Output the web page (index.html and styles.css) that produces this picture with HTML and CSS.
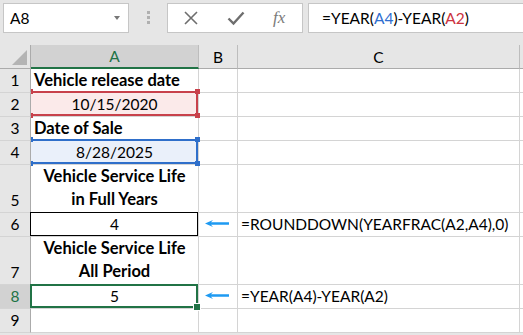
FILE: index.html
```html
<!DOCTYPE html>
<html>
<head>
<meta charset="utf-8">
<link rel="stylesheet" href="styles.css">
</head>
<body>
<div class="app">
  <div class="fbar">
    <div class="namebox"><span class="nb-text">A8</span><span class="nb-caret"></span></div>
    <div class="grip"><i></i><i></i><i></i></div>
    <div class="fbtns">
      <svg class="ico-x" width="16" height="16" viewBox="0 0 16 16"><path d="M2 2 L14 14 M14 2 L2 14" stroke="#6e6e6e" stroke-width="1.6" fill="none"/></svg>
      <svg class="ico-ok" width="18" height="16" viewBox="0 0 18 16"><path d="M1.5 8.5 L6.5 13.5 L16.5 2.5" stroke="#6e6e6e" stroke-width="2.4" fill="none"/></svg>
      <span class="fx">fx</span>
    </div>
    <div class="finput">=YEAR(<span class="ref-b">A4</span>)-YEAR(<span class="ref-r">A2</span>)</div>
  </div>
  <div class="grid">
    <div class="corner"><span class="tri"></span></div>
    <div class="ch ch-sel">A</div>
    <div class="ch">B</div>
    <div class="ch">C</div>
    <div class="ch ch-end"></div>

    <div class="rh">1</div>
    <div class="c bold left">Vehicle release date</div>
    <div class="c"></div><div class="c"></div><div class="c end"></div>

    <div class="rh">2</div>
    <div class="c center hl-r">10/15/2020<div class="sel sel-r"><i class="h tr"></i><i class="h br"></i><i class="h tl"></i><i class="h bl"></i></div></div>
    <div class="c"></div><div class="c"></div><div class="c end"></div>

    <div class="rh">3</div>
    <div class="c bold left">Date of Sale</div>
    <div class="c"></div><div class="c"></div><div class="c end"></div>

    <div class="rh">4</div>
    <div class="c center hl-b">8/28/2025<div class="sel sel-b"><i class="h tr"></i><i class="h br"></i><i class="h tl"></i><i class="h bl"></i></div></div>
    <div class="c"></div><div class="c"></div><div class="c end"></div>

    <div class="rh">5</div>
    <div class="c bold center wrap">Vehicle Service Life<br>in Full Years</div>
    <div class="c"></div><div class="c"></div><div class="c end"></div>

    <div class="rh">6</div>
    <div class="c center">4<div class="box-k"></div></div>
    <div class="c center"><svg class="arrow" width="24" height="7" viewBox="0 0 24 7"><path d="M0 3.5 L8 0 L6 2.3 L24 2.3 L24 4.7 L6 4.7 L8 7 Z" fill="#1e9af2"/></svg></div>
    <div class="c left">=ROUNDDOWN(YEARFRAC(A2,A4),0)</div>
    <div class="c end"></div>

    <div class="rh">7</div>
    <div class="c bold center wrap">Vehicle Service Life<br>All Period</div>
    <div class="c"></div><div class="c"></div><div class="c end"></div>

    <div class="rh rh-sel">8</div>
    <div class="c center">5<div class="sel sel-g"><i class="h hg"></i></div></div>
    <div class="c center"><svg class="arrow" width="24" height="7" viewBox="0 0 24 7"><path d="M0 3.5 L8 0 L6 2.3 L24 2.3 L24 4.7 L6 4.7 L8 7 Z" fill="#1e9af2"/></svg></div>
    <div class="c left">=YEAR(A4)-YEAR(A2)</div>
    <div class="c end"></div>

    <div class="rh">9</div>
    <div class="c"></div><div class="c"></div><div class="c"></div><div class="c end"></div>
  </div>
</div>
</body>
</html>
```
FILE: styles.css
```css
* { box-sizing: border-box; }
html, body { margin: 0; padding: 0; }
body {
  width: 523px;
  height: 335px;
  overflow: hidden;
  background: #e6e6e6;
  font-family: "Lato", "Liberation Sans", sans-serif;
  font-size: 15.5px;
  color: #000;
}
.app { width: 523px; }

.fbar {
  height: 45px;
  display: flex;
  align-items: flex-start;
  padding: 3px 0 0 3px;
}
.namebox {
  width: 126px;
  height: 30px;
  background: #fff;
  border: 1px solid #c6c6c6;
  display: flex;
  align-items: center;
  justify-content: space-between;
  padding: 0 8px 0 6px;
}
.nb-text { font-size: 15.5px; }
.nb-caret {
  width: 0; height: 0;
  border-left: 3.5px solid transparent;
  border-right: 3.5px solid transparent;
  border-top: 4px solid #777;
}
.grip {
  width: 38px;
  height: 30px;
  display: flex;
  flex-direction: column;
  align-items: center;
  gap: 2px;
  padding-top: 8px;
}
.grip i { display: block; width: 3px; height: 3px; background: #b0b0b0; }
.fbtns {
  width: 136px;
  height: 30px;
  background: #fff;
  border: 1px solid #c6c6c6;
  display: flex;
  align-items: center;
  padding-left: 15px;
}
.ico-ok { margin-left: 28px; }
.fx {
  margin-left: 28px;
  font-family: "Liberation Serif", serif;
  font-style: italic;
  font-size: 17px;
  color: #7a7a7a;
}
.finput {
  flex: 1;
  margin-left: 5px;
  height: 30px;
  background: #fff;
  border: 1px solid #c6c6c6;
  border-right: none;
  padding-left: 13px;
  line-height: 28px;
  font-size: 15.5px;
}
.ref-b { color: #2f6fd0; }
.ref-r { color: #cc3340; }

.grid {
  display: grid;
  grid-template-columns: 31px 168px 39px 282px 3px;
  grid-template-rows: 24px 24px 24px 24px 24px 48px 24px 48px 24px 24px;
  background: #fff;
}
.corner {
  background: #e6e6e6;
  border-right: 1px solid #ababab;
  border-bottom: 1px solid #ababab;
  position: relative;
}
.tri {
  position: absolute;
  right: 3px;
  bottom: 3px;
  width: 0; height: 0;
  border-left: 15px solid transparent;
  border-bottom: 15px solid #b4b4b4;
}
.ch {
  background: #e6e6e6;
  border-right: 1px solid #bdbdbd;
  border-bottom: 1px solid #ababab;
  display: flex;
  align-items: center;
  justify-content: center;
  font-size: 15.5px;
}
.ch-sel {
  background: #d2d2d2;
  color: #217346;
  border-bottom: 2px solid #217346;
}
.ch-end { border-right: none; }
.rh {
  background: #e6e6e6;
  border-right: 1px solid #ababab;
  border-bottom: 1px solid #d4d4d4;
  display: flex;
  align-items: flex-end;
  justify-content: center;
  padding-bottom: 2px;
  font-size: 15.5px;
  line-height: 20px;
}
.rh-sel { background: #d2d2d2; color: #217346; }

.c {
  position: relative;
  background: #fff;
  border-right: 1px solid #d4d4d4;
  border-bottom: 1px solid #d4d4d4;
  display: flex;
  align-items: flex-end;
  padding-bottom: 2px;
  line-height: 20px;
  white-space: nowrap;
}
.c.end { border-right: none; }
.left { justify-content: flex-start; padding-left: 3px; }
.center { justify-content: center; text-align: center; }
.bold { font-weight: 700; font-size: 16.5px; }
.wrap { line-height: 23px; padding-bottom: 1px; }
.c .arrow { align-self: center; margin-left: -3px; }

.hl-r { background: #fbeaea; }
.hl-b { background: #eaf0fa; }

.sel {
  position: absolute;
  left: 0;
  right: 0;
  top: -2px;
  bottom: 0;
  border: 2px solid;
  border-left: none;
  z-index: 2;
}
.sel-r { border-color: #c8414b; }
.sel-b { border-color: #2f6fca; }
.sel-g {
  border-color: #217346;
  border-left: 2px solid #217346;
  left: -1px;
  top: -1px;
}
.h {
  position: absolute;
  width: 5px;
  height: 5px;
  display: block;
}
.sel-r .h { background: #c8414b; }
.sel-b .h { background: #2f6fca; }
.h.tr { right: -4px; top: -4px; }
.h.br { right: -4px; bottom: -4px; }
.h.tl { left: 0; top: -4px; width: 2px; }
.h.bl { left: 0; bottom: -4px; width: 2px; }
.h.hg {
  right: -4px;
  bottom: -4px;
  width: 6px; height: 6px;
  background: #217346;
  outline: 1px solid #fff;
}
.box-k {
  position: absolute;
  left: -1px;
  top: -1px;
  right: 0;
  bottom: 0;
  border: 1px solid #000;
  z-index: 2;
}
```
